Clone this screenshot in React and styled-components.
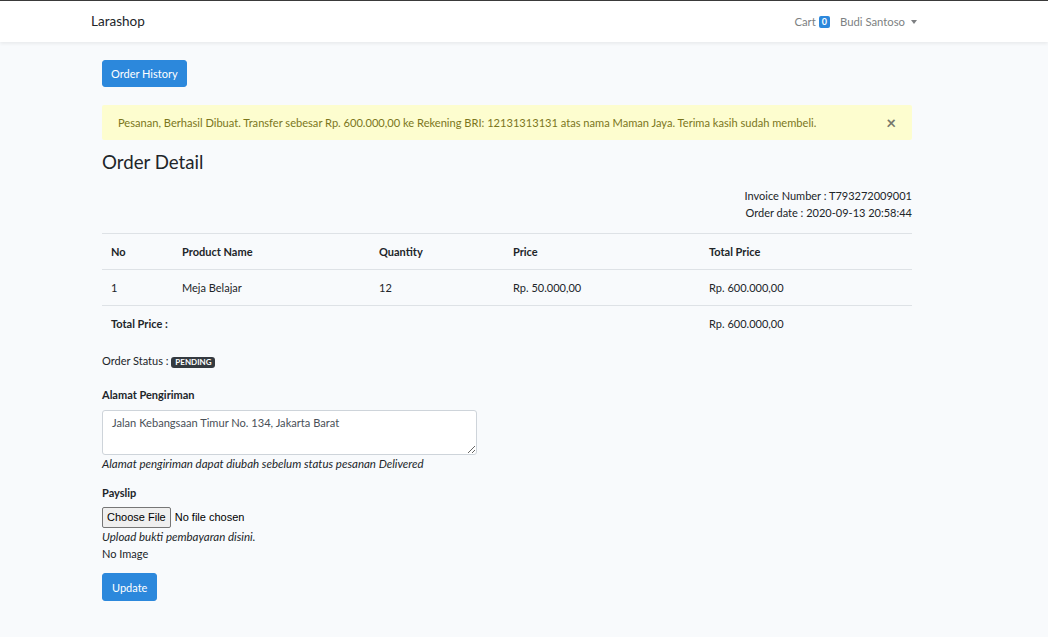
import React from 'react';
import styled, { createGlobalStyle } from 'styled-components';

const GlobalStyle = createGlobalStyle`
  html, body {
    margin: 0;
    padding: 0;
    background: #f8fafc;
    color: #212529;
    font-family: Lato, "Noto Sans", sans-serif;
    font-size: 11px;
    line-height: 17px;
  }
`;

const Page = styled.div`
  min-height: 637px;
  border-top: 1px solid #3a3a3a;
  box-sizing: border-box;
`;

const Navbar = styled.nav`
  background: #fff;
  height: 41px;
  box-shadow: 0 2px 3px rgba(0, 0, 0, 0.06);
  display: flex;
  align-items: center;
  justify-content: space-between;
  padding: 0 131px 0 91px;
`;

const Brand = styled.a`
  font-size: 13.5px;
  color: #212529;
  text-decoration: none;
`;

const NavRight = styled.div`
  display: flex;
  align-items: center;
  gap: 10px;
  color: #7d7f82;
  font-size: 11.3px;
`;

const NavBadge = styled.span`
  display: inline-block;
  background: #2c88dc;
  color: #fff;
  font-size: 9px;
  font-weight: 700;
  line-height: 12px;
  padding: 0 3px;
  border-radius: 2px;
  margin-left: 3px;
  vertical-align: 1px;
`;

const Caret = styled.span`
  display: inline-block;
  margin-left: 6px;
  border-top: 4px solid #7d7f82;
  border-left: 3.5px solid transparent;
  border-right: 3.5px solid transparent;
  vertical-align: 2px;
`;

const Main = styled.main`
  width: 810px;
  margin-left: 102px;
  padding-top: 18px;
`;

const Button = styled.button`
  display: block;
  background: #2c88dc;
  color: #fff;
  border: 1px solid #2c88dc;
  border-radius: 3px;
  font-family: inherit;
  font-size: 11px;
  height: ${(p) => p.$h}px;
  padding: 0 ${(p) => p.$px}px;
  cursor: pointer;
`;

const Alert = styled.div`
  margin-top: 18px;
  height: 35px;
  background: #fdfdcf;
  color: #7b761c;
  border-radius: 2px;
  display: flex;
  align-items: center;
  justify-content: space-between;
  padding: 0 16px;
  font-size: 11.1px;
`;

const Close = styled.span`
  color: #76776b;
  font-size: 17px;
  font-weight: 700;
  line-height: 1;
`;

const Title = styled.h3`
  margin: 10px 0 0;
  font-size: 18.7px;
  font-weight: 400;
  line-height: 24px;
`;

const Invoice = styled.div`
  text-align: right;
  margin-top: 13px;
  line-height: 17px;
`;

const Table = styled.table`
  width: 100%;
  table-layout: fixed;
  border-collapse: collapse;
  margin-top: 12px;
`;

const Th = styled.th`
  box-sizing: border-box;
  text-align: left;
  font-weight: 700;
  height: 36px;
  padding: 0 9px;
  border-top: 1px solid #dee2e6;
  border-bottom: 1px solid #dee2e6;
  width: ${(p) => (p.$w ? `${p.$w}px` : 'auto')};
`;

const Td = styled.td`
  height: 35px;
  padding: 0 9px;
  font-weight: ${(p) => (p.$bold ? 700 : 400)};
  border-bottom: ${(p) => (p.$last ? 'none' : '1px solid #dee2e6')};
`;

const StatusLine = styled.div`
  margin-top: 11px;
`;

const Badge = styled.span`
  display: inline-block;
  background: #343a40;
  color: #fff;
  font-size: 8px;
  font-weight: 700;
  line-height: 11px;
  padding: 0 4px;
  border-radius: 3px;
  vertical-align: 0;
`;

const Label = styled.div`
  font-weight: 700;
  margin-top: ${(p) => p.$mt}px;
`;

const TextArea = styled.textarea`
  display: block;
  margin-top: 7px;
  width: 375px;
  height: 45px;
  box-sizing: border-box;
  border: 1px solid #ced4da;
  border-radius: 3px;
  padding: 5px 9px;
  font-family: inherit;
  font-size: 11.1px;
  color: #495057;
  background: #fff;
  resize: vertical;
`;

const Help = styled.div`
  font-style: italic;
  font-size: 11.5px;
  line-height: 17px;
  color: #212529;
`;

const FileRow = styled.div`
  margin-top: 6px;
  display: flex;
  align-items: center;
  gap: 4px;
`;

const FileButton = styled.span`
  display: inline-block;
  font-family: "Liberation Sans", Arial, sans-serif;
  font-size: 11px;
  height: 21px;
  line-height: 19px;
  box-sizing: border-box;
  padding: 0 4px;
  background: #efefef;
  border: 1px solid #767676;
  border-radius: 2px;
  color: #000;
`;

const FileText = styled.span`
  font-family: "Liberation Sans", Arial, sans-serif;
  font-size: 11px;
  color: #000;
`;

const ButtonWrap = styled.div`
  margin-top: 11px;
`;

export default function App() {
  return (
    <Page>
      <GlobalStyle />
      <Navbar>
        <Brand href="#">Larashop</Brand>
        <NavRight>
          <span>
            Cart<NavBadge>0</NavBadge>
          </span>
          <span>
            Budi Santoso<Caret />
          </span>
        </NavRight>
      </Navbar>
      <Main>
        <Button $h={27} $px={8}>Order History</Button>
        <Alert>
          <span>
            Pesanan, Berhasil Dibuat. Transfer sebesar Rp. 600.000,00 ke Rekening BRI: 12131313131 atas nama Maman
            Jaya. Terima kasih sudah membeli.
          </span>
          <Close>×</Close>
        </Alert>
        <Title>Order Detail</Title>
        <Invoice>
          <div>Invoice Number : T793272009001</div>
          <div>Order date : 2020-09-13 20:58:44</div>
        </Invoice>
        <Table>
          <thead>
            <tr>
              <Th $w={71}>No</Th>
              <Th $w={197}>Product Name</Th>
              <Th $w={134}>Quantity</Th>
              <Th $w={196}>Price</Th>
              <Th>Total Price</Th>
            </tr>
          </thead>
          <tbody>
            <tr>
              <Td>1</Td>
              <Td>Meja Belajar</Td>
              <Td>12</Td>
              <Td>Rp. 50.000,00</Td>
              <Td>Rp. 600.000,00</Td>
            </tr>
            <tr>
              <Td $bold $last colSpan={4}>Total Price :</Td>
              <Td $last>Rp. 600.000,00</Td>
            </tr>
          </tbody>
        </Table>
        <StatusLine>
          Order Status : <Badge>PENDING</Badge>
        </StatusLine>
        <Label $mt={17}>Alamat Pengiriman</Label>
        <TextArea defaultValue="Jalan Kebangsaan Timur No. 134, Jakarta Barat" />
        <Help>Alamat pengiriman dapat diubah sebelum status pesanan Delivered</Help>
        <Label $mt={12}>Payslip</Label>
        <FileRow>
          <FileButton>Choose File</FileButton>
          <FileText>No file chosen</FileText>
        </FileRow>
        <Help>Upload bukti pembayaran disini.</Help>
        <div>No Image</div>
        <ButtonWrap>
          <Button $h={28} $px={9}>Update</Button>
        </ButtonWrap>
      </Main>
    </Page>
  );
}
